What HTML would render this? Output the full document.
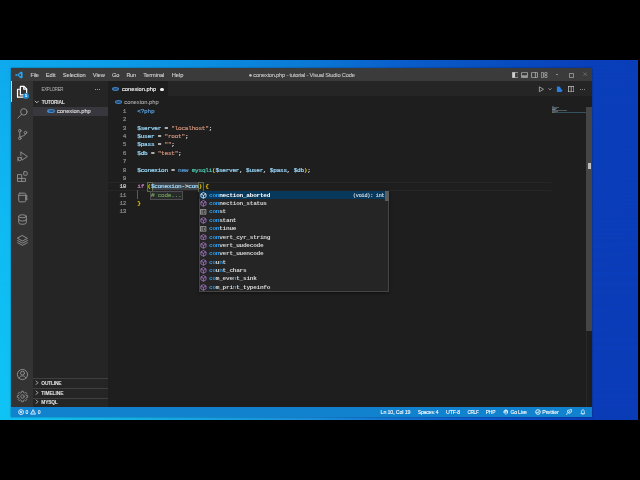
<!DOCTYPE html>
<html lang="en"><head><meta charset="utf-8"><title>conexion.php - tutorial - Visual Studio Code</title>
<style>
html,body{margin:0;padding:0;background:#000;}
body{width:640px;height:480px;position:relative;overflow:hidden;font-family:"Liberation Sans",sans-serif;}
#root{position:absolute;left:0;top:0;width:640px;height:480px;will-change:transform}
.b{position:absolute;display:block}
.t{position:absolute;white-space:pre;line-height:10px;height:10px;-webkit-text-stroke:.1px currentColor}
#wall{left:0;top:60px;width:638px;height:360px;background:linear-gradient(to right,#0faaed 0%,#0c9ee9 16.6%,#0b8de1 32.3%,#0b79d6 48%,#0a5dca 63.6%,#084dbf 79.3%,#0a3fba 93%,#0a3eba 100%)}
#wall2{left:0;top:60px;width:638px;height:360px;background:linear-gradient(to right,#0fc3f5 0%,#17b4e8 18%,#1a8fdd 49%,#0d55c8 77.6%,#0b3cb8 93%,#0b3cb8 100%);-webkit-mask-image:linear-gradient(to bottom,transparent 0%,rgba(0,0,0,.7) 50%,#000 97%);mask-image:linear-gradient(to bottom,transparent 0%,rgba(0,0,0,.7) 50%,#000 97%)}
.c{font-family:"Liberation Mono",monospace;font-size:6.100px;white-space:pre;position:absolute;line-height:8px;height:8px;letter-spacing:-0.261px;-webkit-text-stroke:.2px currentColor}
</style></head>
<body>
<div id="root">
<div class="b" id="wall"></div><div class="b" id="wall2"></div>
<div class="b" style="left:11.00px;top:68.00px;width:581.00px;height:348.80px;background:#1e1e1e;box-shadow:0 0 1.6px rgba(0,10,40,.55);"></div>
<div class="b" style="left:11.00px;top:68.00px;width:581.00px;height:13.20px;background:#3b3b3b;"></div>
<div class="b" style="left:11.00px;top:81.20px;width:21.50px;height:325.55px;background:#333333;"></div>
<div class="b" style="left:32.50px;top:81.20px;width:75.30px;height:325.55px;background:#252526;"></div>
<div class="b" style="left:107.80px;top:81.20px;width:484.20px;height:15.20px;background:#252526;"></div>
<div class="b" style="left:11.00px;top:406.75px;width:581.00px;height:10.05px;background:#1182ce;"></div>
<svg class="b" style="left:14.90px;top:71.00px;" width="8.20" height="8.00" viewBox="0 0 16 16"><path d="M11.5 1 L15 2.6 V13.4 L11.5 15 L4.3 8.6 L1.8 10.6 L1 10 V6 L1.8 5.4 L4.3 7.4 Z M11.5 5 L7 8 L11.5 11 Z" fill="#2aa4f0" fill-rule="evenodd"/></svg>
<div class="t" style="left:30.60px;top:70px;font-size:5.56px;color:#d2d2d2;letter-spacing:-0.220px;">File</div>
<div class="t" style="left:45.70px;top:70px;font-size:5.75px;color:#d2d2d2;letter-spacing:-0.036px;">Edit</div>
<div class="t" style="left:62.80px;top:70px;font-size:5.75px;color:#d2d2d2;letter-spacing:-0.082px;">Selection</div>
<div class="t" style="left:92.80px;top:70px;font-size:5.75px;color:#d2d2d2;letter-spacing:-0.120px;">View</div>
<div class="t" style="left:111.90px;top:70px;font-size:5.75px;color:#d2d2d2;letter-spacing:-0.170px;">Go</div>
<div class="t" style="left:126.40px;top:70px;font-size:5.47px;color:#d2d2d2;letter-spacing:-0.220px;">Run</div>
<div class="t" style="left:143.30px;top:70px;font-size:5.75px;color:#d2d2d2;letter-spacing:-0.090px;">Terminal</div>
<div class="t" style="left:171.80px;top:70px;font-size:5.75px;color:#d2d2d2;letter-spacing:-0.075px;">Help</div>
<div class="t" style="left:248.70px;top:70px;font-size:5.75px;color:#c6c6c6;letter-spacing:-0.208px;">● conexion.php - tutorial - Visual Studio Code</div>
<svg class="b" style="left:511.90px;top:71.70px;" width="6.60" height="6.00" viewBox="0 0 12 11"><rect x=".6" y=".6" width="10.8" height="9.8" rx="1" fill="none" stroke="#d0d0d0" stroke-width="1.2"/><rect x=".6" y=".6" width="5" height="9.8" fill="#d0d0d0"/></svg>
<svg class="b" style="left:520.90px;top:71.70px;" width="7.00" height="6.00" viewBox="0 0 12 11"><rect x=".6" y=".6" width="10.8" height="9.8" rx="1" fill="none" stroke="#d0d0d0" stroke-width="1.2"/><rect x=".6" y="6" width="10.8" height="4.4" fill="#9a9a9a"/></svg>
<svg class="b" style="left:531.00px;top:71.70px;" width="7.00" height="6.00" viewBox="0 0 12 11"><rect x=".6" y=".6" width="10.8" height="9.8" rx="1" fill="none" stroke="#d0d0d0" stroke-width="1.2"/><path d="M7.6 .6V10.4" stroke="#d0d0d0" stroke-width="1.2"/></svg>
<svg class="b" style="left:541.30px;top:71.70px;" width="6.40" height="6.00" viewBox="0 0 12 11"><rect x=".6" y=".6" width="4.2" height="9.8" rx="1.3" fill="none" stroke="#d0d0d0" stroke-width="1.2"/><rect x="7" y=".6" width="4.4" height="4" rx="1.3" fill="none" stroke="#d0d0d0" stroke-width="1.2"/><rect x="7" y="6.4" width="4.4" height="4" rx="1.3" fill="none" stroke="#d0d0d0" stroke-width="1.2"/></svg>
<div class="b" style="left:555.50px;top:74.20px;width:2.90px;height:0.50px;background:#8e8e8e;"></div>
<div class="b" style="left:569.2px;top:72.8px;width:3.0px;height:3.0px;border:.45px solid #8e8e8e;border-radius:.8px"></div>
<svg class="b" style="left:582.60px;top:72.40px;" width="4.40" height="4.40" viewBox="0 0 10 10"><path d="M1 1L9 9M9 1L1 9" stroke="#a4a4a4" stroke-width=".9" fill="none"/></svg>
<div class="b" style="left:11.10px;top:81.30px;width:0.90px;height:21.10px;background:#a6def2;"></div>
<svg class="b" style="left:15.20px;top:84.60px;" width="13.60" height="13.60" viewBox="0 0 24 24"><g fill="none" stroke="#ffffff" stroke-width="2.2" stroke-linejoin="round" stroke-linecap="round"><path d="M9.5 2.5H16L20.5 7V17.5H9.5Z"/><path d="M15.5 2.5V7.5H20.5"/><path d="M9.5 7.5H4.5V21.5H15.5V17.5"/></g></svg>
<div class="b" style="left:22.5px;top:92.5px;width:6.8px;height:6.8px;border-radius:50%;background:#1887d6"></div>
<div class="t" style="left:22.5px;top:91px;width:6.8px;text-align:center;font-size:4.4px;color:#fff;font-weight:700">1</div>
<svg class="b" style="left:15.50px;top:106.70px;" width="13.00" height="13.00" viewBox="0 0 24 24"><g fill="none" stroke="#8e8e8e" stroke-width="1.8" stroke-linejoin="round" stroke-linecap="round"><circle cx="14.5" cy="9" r="6"/><path d="M10.3 13.4L3.5 20.5"/></g></svg>
<svg class="b" style="left:15.50px;top:127.90px;" width="13.00" height="13.00" viewBox="0 0 24 24"><g fill="none" stroke="#8e8e8e" stroke-width="1.8" stroke-linejoin="round" stroke-linecap="round"><circle cx="7" cy="5" r="2.4"/><circle cx="7" cy="19" r="2.4"/><circle cx="17.5" cy="8.5" r="2.4"/><path d="M7 7.4V16.6"/><path d="M17.5 10.9C17.5 14.5 12 14 7.6 16.8"/></g></svg>
<svg class="b" style="left:15.50px;top:149.50px;" width="13.00" height="13.00" viewBox="0 0 24 24"><g fill="none" stroke="#8e8e8e" stroke-width="1.8" stroke-linejoin="round" stroke-linecap="round"><path d="M9 4L21 12L11.5 18.5"/><path d="M9 4V10"/><circle cx="7" cy="16.5" r="3.2"/><path d="M3 13.5L4.5 14.5M3 20L4.6 18.8M11 13.5L9.5 14.5M2.6 16.8H3.8"/></g></svg>
<svg class="b" style="left:15.50px;top:170.40px;" width="13.00" height="13.00" viewBox="0 0 24 24"><g fill="none" stroke="#8e8e8e" stroke-width="1.8" stroke-linejoin="round" stroke-linecap="round"><path d="M3.5 8.5H10.5V15.5H17.5V21H3.5ZM10.5 15.5H3.5M10.5 15.5V21"/><rect x="14.2" y="3.2" width="6.4" height="6.4" rx="1"/></g></svg>
<svg class="b" style="left:15.50px;top:191.40px;" width="13.00" height="13.00" viewBox="0 0 24 24"><g fill="none" stroke="#8e8e8e" stroke-width="1.8" stroke-linejoin="round" stroke-linecap="round"><rect x="5" y="4" width="13" height="16" rx="2.2"/><path d="M5 8H18"/><path d="M18 8.5H20.3V11.5H18M18 13H20.3V16H18"/></g></svg>
<svg class="b" style="left:15.50px;top:213.10px;" width="13.00" height="13.00" viewBox="0 0 24 24"><g fill="none" stroke="#8e8e8e" stroke-width="1.8" stroke-linejoin="round" stroke-linecap="round"><ellipse cx="12" cy="6" rx="7" ry="2.8"/><path d="M5 6V18C5 19.6 8 20.8 12 20.8S19 19.6 19 18V6"/><path d="M5 12C5 13.6 8 14.8 12 14.8S19 13.6 19 12"/></g></svg>
<svg class="b" style="left:15.50px;top:234.20px;" width="13.00" height="13.00" viewBox="0 0 24 24"><g fill="none" stroke="#8e8e8e" stroke-width="1.8" stroke-linejoin="round" stroke-linecap="round"><path d="M12 3L21 8L12 13L3 8Z"/><path d="M3 12L12 17L21 12"/><path d="M3 16L12 21L21 16"/></g></svg>
<svg class="b" style="left:15.50px;top:367.70px;" width="13.00" height="13.00" viewBox="0 0 24 24"><g fill="none" stroke="#8e8e8e" stroke-width="1.8" stroke-linejoin="round" stroke-linecap="round"><circle cx="12" cy="12" r="9.4"/><circle cx="12" cy="9.4" r="3.6"/><path d="M5.6 18.6C7 15.6 9 14.6 12 14.6S17 15.6 18.4 18.6"/></g></svg>
<svg class="b" style="left:15.50px;top:389.90px;" width="13.00" height="13.00" viewBox="0 0 24 24"><g fill="none" stroke="#8e8e8e" stroke-width="1.8" stroke-linejoin="round" stroke-linecap="round"><path d="M19.18 10.20L21.68 10.47L21.68 13.53L19.18 13.80L18.35 15.80L19.93 17.76L17.76 19.93L15.80 18.35L13.80 19.18L13.53 21.68L10.47 21.68L10.20 19.18L8.20 18.35L6.24 19.93L4.07 17.76L5.65 15.80L4.82 13.80L2.32 13.53L2.32 10.47L4.82 10.20L5.65 8.20L4.07 6.24L6.24 4.07L8.20 5.65L10.20 4.82L10.47 2.32L13.53 2.32L13.80 4.82L15.80 5.65L17.76 4.07L19.93 6.24L18.35 8.20Z" stroke-width="1.7"/><circle cx="12" cy="12" r="3.2" stroke-width="1.7"/></g></svg>
<div class="t" style="left:41.60px;top:85px;font-size:4.42px;color:#b4b4b4;letter-spacing:-0.300px;-webkit-text-stroke:0;">EXPLORER</div>
<div class="b" style="left:94.55px;top:88.95px;width:1.1px;height:1.1px;border-radius:50%;background:#c4c4c4"></div>
<div class="b" style="left:96.85px;top:88.95px;width:1.1px;height:1.1px;border-radius:50%;background:#c4c4c4"></div>
<div class="b" style="left:99.05px;top:88.95px;width:1.1px;height:1.1px;border-radius:50%;background:#c4c4c4"></div>
<svg class="b" style="left:33.90px;top:99.30px;" width="5.60" height="5.60" viewBox="0 0 10 10"><path d="M1.5 3.3L5 6.8L8.5 3.3" fill="none" stroke="#cccccc" stroke-width="1.6"/></svg>
<div class="t" style="left:41.70px;top:98px;font-size:4.85px;color:#dedede;font-weight:700;letter-spacing:-0.190px;">TUTORIAL</div>
<div class="b" style="left:32.50px;top:106.75px;width:75.30px;height:9.30px;background:#37373d;"></div>
<div class="b" style="left:47.35px;top:109.30px;width:7.70px;height:4.20px;border-radius:50%;background:#4088cc"></div>
<div class="b" style="left:48.70px;top:110.45px;width:5.00px;height:1.90px;border-radius:50%;background:#2a5078"></div>
<div class="t" style="left:57.00px;top:106px;font-size:5.75px;color:#e0e0e0;letter-spacing:-0.037px;">conexion.php</div>
<div class="b" style="left:32.50px;top:377.70px;width:75.30px;height:0.60px;background:#3f3f3f;"></div>
<svg class="b" style="left:34.20px;top:380.30px;" width="5.40" height="5.40" viewBox="0 0 10 10"><path d="M3.5 1.3L7.2 5L3.5 8.7" fill="none" stroke="#cccccc" stroke-width="1.6"/></svg>
<div class="t" style="left:41.30px;top:379px;font-size:4.85px;color:#dedede;font-weight:700;letter-spacing:-0.181px;">OUTLINE</div>
<div class="b" style="left:32.50px;top:387.70px;width:75.30px;height:0.60px;background:#3f3f3f;"></div>
<svg class="b" style="left:34.20px;top:390.30px;" width="5.40" height="5.40" viewBox="0 0 10 10"><path d="M3.5 1.3L7.2 5L3.5 8.7" fill="none" stroke="#cccccc" stroke-width="1.6"/></svg>
<div class="t" style="left:41.30px;top:389px;font-size:4.85px;color:#dedede;font-weight:700;letter-spacing:-0.062px;">TIMELINE</div>
<div class="b" style="left:32.50px;top:397.70px;width:75.30px;height:0.60px;background:#3f3f3f;"></div>
<svg class="b" style="left:34.20px;top:399.30px;" width="5.40" height="5.40" viewBox="0 0 10 10"><path d="M3.5 1.3L7.2 5L3.5 8.7" fill="none" stroke="#cccccc" stroke-width="1.6"/></svg>
<div class="t" style="left:41.30px;top:398px;font-size:4.85px;color:#dedede;font-weight:700;letter-spacing:-0.199px;">MYSQL</div>
<div class="b" style="left:107.80px;top:81.20px;width:59.95px;height:15.20px;background:#1e1e1e;"></div>
<div class="b" style="left:111.77px;top:87.21px;width:7.47px;height:4.07px;border-radius:50%;background:#4088cc"></div>
<div class="b" style="left:113.08px;top:88.33px;width:4.85px;height:1.84px;border-radius:50%;background:#2a5078"></div>
<div class="t" style="left:122.00px;top:84px;font-size:5.75px;color:#ffffff;letter-spacing:-0.010px;">conexion.php</div>
<div class="b" style="left:160.1px;top:87.5px;width:3.8px;height:3.8px;border-radius:50%;background:#f0f0f0"></div>
<div class="b" style="left:114.86px;top:100.07px;width:7.08px;height:3.86px;border-radius:50%;background:#4088cc"></div>
<div class="b" style="left:116.10px;top:101.13px;width:4.60px;height:1.75px;border-radius:50%;background:#2a5078"></div>
<div class="t" style="left:124.30px;top:97px;font-size:5.75px;color:#ababab;letter-spacing:0.009px;">conexion.php</div>
<svg class="b" style="left:538.20px;top:85.80px;" width="6.60" height="6.60" viewBox="0 0 12 12"><path d="M2.5 1.6L10 6L2.5 10.4Z" fill="none" stroke="#d0d0d0" stroke-width="1.2" stroke-linejoin="round"/></svg>
<svg class="b" style="left:547.50px;top:87.40px;" width="4.00" height="4.00" viewBox="0 0 10 10"><path d="M1.5 3.5L5 7L8.5 3.5" fill="none" stroke="#d4d4d4" stroke-width="1.7"/></svg>
<svg class="b" style="left:555.90px;top:85.60px;" width="7.40" height="6.80" viewBox="0 0 12 12"><path d="M1 1H5.6L8 3.4V5.2L11.4 7.4L8.6 10.8H1Z" fill="#2b7de0"/></svg>
<svg class="b" style="left:567.80px;top:85.90px;" width="6.40" height="6.40" viewBox="0 0 12 12"><rect x="1" y="1" width="10" height="10" fill="none" stroke="#d0d0d0" stroke-width="1.3"/><path d="M6 1V11" stroke="#d0d0d0" stroke-width="1.3"/></svg>
<div class="b" style="left:579.90px;top:88.7px;width:.9px;height:.9px;border-radius:50%;background:#c8c8c8"></div>
<div class="b" style="left:581.70px;top:88.7px;width:.9px;height:.9px;border-radius:50%;background:#c8c8c8"></div>
<div class="b" style="left:583.50px;top:88.7px;width:.9px;height:.9px;border-radius:50%;background:#c8c8c8"></div>
<div class="b" style="left:107.80px;top:181.93px;width:443.70px;height:0.60px;background:#262626;"></div>
<div class="b" style="left:107.80px;top:190.05px;width:443.70px;height:0.60px;background:#262626;"></div>
<div class="b" style="left:150.90px;top:182.43px;width:47.60px;height:7.47px;background:#3b4146;"></div>
<div class="b" style="left:147.20px;top:182.33px;width:3.60px;height:7.27px;border:.4px solid #66664c;background:#222a20"></div>
<div class="b" style="left:198.20px;top:182.33px;width:3.60px;height:7.27px;border:.4px solid #66664c;background:#222a20"></div>
<div class="b" style="left:137.30px;top:190.40px;width:0.45px;height:8.37px;background:#5a5a5a;"></div>
<div class="b" style="left:150.40px;top:190.60px;width:31.10px;height:7.27px;border:.45px solid #4e4e4e;background:#282a2b"></div>
<div class="c" style="left:137.30px;top:108px;"><span style="color:#569cd6">&lt;?php</span></div>
<div class="c" style="left:137.30px;top:125px;"><span style="color:#9cdcfe">$server</span><span style="color:#d4d4d4"> = </span><span style="color:#ce9178">&quot;localhost&quot;</span><span style="color:#d4d4d4">;</span></div>
<div class="c" style="left:137.30px;top:133px;"><span style="color:#9cdcfe">$user</span><span style="color:#d4d4d4"> = </span><span style="color:#ce9178">&quot;root&quot;</span><span style="color:#d4d4d4">;</span></div>
<div class="c" style="left:137.30px;top:141px;"><span style="color:#9cdcfe">$pass</span><span style="color:#d4d4d4"> = </span><span style="color:#ce9178">&quot;&quot;</span><span style="color:#d4d4d4">;</span></div>
<div class="c" style="left:137.30px;top:150px;"><span style="color:#9cdcfe">$db</span><span style="color:#d4d4d4"> = </span><span style="color:#ce9178">&quot;test&quot;</span><span style="color:#d4d4d4">;</span></div>
<div class="c" style="left:137.30px;top:167px;"><span style="color:#9cdcfe">$conexion</span><span style="color:#d4d4d4"> = </span><span style="color:#569cd6">new</span><span style="color:#d4d4d4"> </span><span style="color:#4ec9b0">mysqli</span><span style="color:#ffd700">(</span><span style="color:#9cdcfe">$server</span><span style="color:#d4d4d4">, </span><span style="color:#9cdcfe">$user</span><span style="color:#d4d4d4">, </span><span style="color:#9cdcfe">$pass</span><span style="color:#d4d4d4">, </span><span style="color:#9cdcfe">$db</span><span style="color:#ffd700">)</span><span style="color:#d4d4d4">;</span></div>
<div class="c" style="left:137.30px;top:183px;"><span style="color:#c586c0">if</span><span style="color:#d4d4d4"> </span><span style="color:#ffd700">(</span><span style="color:#9cdcfe">$conexion</span><span style="color:#d4d4d4">-&gt;</span><span style="color:#9cdcfe">con</span><span style="color:#ffd700">)</span><span style="color:#d4d4d4"> </span><span style="color:#ffd700">{</span></div>
<div class="c" style="left:137.30px;top:192px;"><span style="color:#d4d4d4">    </span><span style="color:#6a9955"># code...</span></div>
<div class="c" style="left:137.30px;top:200px;"><span style="color:#ffd700">}</span></div>
<div class="c" style="left:122.80px;top:108px;"><span style="color:#8c8c8c">1</span></div>
<div class="c" style="left:122.80px;top:116px;"><span style="color:#8c8c8c">2</span></div>
<div class="c" style="left:122.80px;top:125px;"><span style="color:#8c8c8c">3</span></div>
<div class="c" style="left:122.80px;top:133px;"><span style="color:#8c8c8c">4</span></div>
<div class="c" style="left:122.80px;top:141px;"><span style="color:#8c8c8c">5</span></div>
<div class="c" style="left:122.80px;top:150px;"><span style="color:#8c8c8c">6</span></div>
<div class="c" style="left:122.80px;top:158px;"><span style="color:#8c8c8c">7</span></div>
<div class="c" style="left:122.80px;top:167px;"><span style="color:#8c8c8c">8</span></div>
<div class="c" style="left:122.80px;top:175px;"><span style="color:#8c8c8c">9</span></div>
<div class="c" style="left:119.40px;top:183px;"><span style="color:#d0d0d0">10</span></div>
<div class="c" style="left:119.40px;top:192px;"><span style="color:#8c8c8c">11</span></div>
<div class="c" style="left:119.40px;top:200px;"><span style="color:#8c8c8c">12</span></div>
<div class="c" style="left:119.40px;top:208px;"><span style="color:#8c8c8c">13</span></div>
<div class="b" style="left:586.00px;top:106.50px;width:6.00px;height:224.80px;background:#454545;"></div>
<div class="b" style="left:586.00px;top:331.30px;width:0.50px;height:75.45px;background:#282828;"></div>
<div class="b" style="left:588.00px;top:162.60px;width:2.90px;height:6.20px;background:#bdbdbd;"></div>
<div class="b" style="left:552.00px;top:112.00px;width:34.00px;height:0.50px;background:#33505f;"></div>
<div class="b" style="left:552.00px;top:106.30px;width:1.50px;height:0.45px;background:#4a78a8;opacity:.55;"></div>
<div class="b" style="left:552.00px;top:107.40px;width:6.60px;height:0.45px;background:#8296a0;opacity:.55;"></div>
<div class="b" style="left:552.00px;top:107.95px;width:4.50px;height:0.45px;background:#8296a0;opacity:.55;"></div>
<div class="b" style="left:552.00px;top:108.50px;width:3.30px;height:0.45px;background:#8296a0;opacity:.55;"></div>
<div class="b" style="left:552.00px;top:109.05px;width:3.90px;height:0.45px;background:#8296a0;opacity:.55;"></div>
<div class="b" style="left:552.00px;top:110.15px;width:15.30px;height:0.45px;background:#76909a;opacity:.55;"></div>
<div class="b" style="left:552.00px;top:111.25px;width:6.30px;height:0.45px;background:#8c8396;opacity:.55;"></div>
<div class="b" style="left:553.20px;top:111.80px;width:2.70px;height:0.45px;background:#56724c;opacity:.55;"></div>
<div class="b" style="left:552.00px;top:112.35px;width:0.30px;height:0.45px;background:#a09238;opacity:.55;"></div>
<div class="b" style="left:198.80px;top:190.50px;width:190.30px;height:101.10px;background:#252526;border:.5px solid #454545;box-sizing:border-box;box-shadow:0 1px 3px rgba(0,0,0,.45);"></div>
<div class="b" style="left:199.30px;top:190.90px;width:189.30px;height:8.38px;background:#08395d;"></div>
<div class="b" style="left:384.60px;top:190.90px;width:4.00px;height:10.60px;background:#5c5c5c;"></div>
<svg class="b" style="left:200.15px;top:191.65px;" width="6.90" height="6.90" viewBox="0 0 16 16"><g fill="none" stroke="#ffffff" stroke-width="1.7" stroke-linejoin="round"><path d="M8 1.3L14 4.4V11.2L8 14.7L2 11.2V4.4Z"/><path d="M2.3 4.6L8 7.8L13.7 4.6M8 7.8V14.4"/></g></svg>
<div class="c" style="left:209.00px;top:192px;font-weight:700;-webkit-text-stroke:0;"><span style="color:#2aa0f0">con</span><span style="color:#ffffff">nection_aborted</span></div>
<svg class="b" style="left:200.15px;top:200.03px;" width="6.90" height="6.90" viewBox="0 0 16 16"><g fill="none" stroke="#b180d7" stroke-width="1.7" stroke-linejoin="round"><path d="M8 1.3L14 4.4V11.2L8 14.7L2 11.2V4.4Z"/><path d="M2.3 4.6L8 7.8L13.7 4.6M8 7.8V14.4"/></g></svg>
<div class="c" style="left:209.00px;top:200px;font-weight:700;-webkit-text-stroke:0;"><span style="color:#2aa0f0">con</span><span style="color:#d6d6d6">nection_status</span></div>
<svg class="b" style="left:200.40px;top:208.96px;" width="6.40" height="5.80" viewBox="0 0 14 12"><g fill="none" stroke="#bdbdbd" stroke-width="1.5"><rect x="1" y="1.2" width="12" height="9.6"/><path d="M3 3.6H7M3 6H6M3 8.4H7M9.4 3.4V8.6" /></g></svg>
<div class="c" style="left:209.00px;top:208px;font-weight:700;-webkit-text-stroke:0;"><span style="color:#2aa0f0">con</span><span style="color:#d6d6d6">st</span></div>
<svg class="b" style="left:200.15px;top:216.79px;" width="6.90" height="6.90" viewBox="0 0 16 16"><g fill="none" stroke="#b180d7" stroke-width="1.7" stroke-linejoin="round"><path d="M8 1.3L14 4.4V11.2L8 14.7L2 11.2V4.4Z"/><path d="M2.3 4.6L8 7.8L13.7 4.6M8 7.8V14.4"/></g></svg>
<div class="c" style="left:209.00px;top:217px;font-weight:700;-webkit-text-stroke:0;"><span style="color:#2aa0f0">con</span><span style="color:#d6d6d6">stant</span></div>
<svg class="b" style="left:200.40px;top:225.72px;" width="6.40" height="5.80" viewBox="0 0 14 12"><g fill="none" stroke="#bdbdbd" stroke-width="1.5"><rect x="1" y="1.2" width="12" height="9.6"/><path d="M3 3.6H7M3 6H6M3 8.4H7M9.4 3.4V8.6" /></g></svg>
<div class="c" style="left:209.00px;top:225px;font-weight:700;-webkit-text-stroke:0;"><span style="color:#2aa0f0">con</span><span style="color:#d6d6d6">tinue</span></div>
<svg class="b" style="left:200.15px;top:233.55px;" width="6.90" height="6.90" viewBox="0 0 16 16"><g fill="none" stroke="#b180d7" stroke-width="1.7" stroke-linejoin="round"><path d="M8 1.3L14 4.4V11.2L8 14.7L2 11.2V4.4Z"/><path d="M2.3 4.6L8 7.8L13.7 4.6M8 7.8V14.4"/></g></svg>
<div class="c" style="left:209.00px;top:234px;font-weight:700;-webkit-text-stroke:0;"><span style="color:#2aa0f0">con</span><span style="color:#d6d6d6">vert_cyr_string</span></div>
<svg class="b" style="left:200.15px;top:241.93px;" width="6.90" height="6.90" viewBox="0 0 16 16"><g fill="none" stroke="#b180d7" stroke-width="1.7" stroke-linejoin="round"><path d="M8 1.3L14 4.4V11.2L8 14.7L2 11.2V4.4Z"/><path d="M2.3 4.6L8 7.8L13.7 4.6M8 7.8V14.4"/></g></svg>
<div class="c" style="left:209.00px;top:242px;font-weight:700;-webkit-text-stroke:0;"><span style="color:#2aa0f0">con</span><span style="color:#d6d6d6">vert_uudecode</span></div>
<svg class="b" style="left:200.15px;top:250.31px;" width="6.90" height="6.90" viewBox="0 0 16 16"><g fill="none" stroke="#b180d7" stroke-width="1.7" stroke-linejoin="round"><path d="M8 1.3L14 4.4V11.2L8 14.7L2 11.2V4.4Z"/><path d="M2.3 4.6L8 7.8L13.7 4.6M8 7.8V14.4"/></g></svg>
<div class="c" style="left:209.00px;top:250px;font-weight:700;-webkit-text-stroke:0;"><span style="color:#2aa0f0">con</span><span style="color:#d6d6d6">vert_uuencode</span></div>
<svg class="b" style="left:200.15px;top:258.69px;" width="6.90" height="6.90" viewBox="0 0 16 16"><g fill="none" stroke="#b180d7" stroke-width="1.7" stroke-linejoin="round"><path d="M8 1.3L14 4.4V11.2L8 14.7L2 11.2V4.4Z"/><path d="M2.3 4.6L8 7.8L13.7 4.6M8 7.8V14.4"/></g></svg>
<div class="c" style="left:209.00px;top:259px;font-weight:700;-webkit-text-stroke:0;"><span style="color:#2aa0f0">co</span><span style="color:#d6d6d6">u</span><span style="color:#2aa0f0">n</span><span style="color:#d6d6d6">t</span></div>
<svg class="b" style="left:200.15px;top:267.07px;" width="6.90" height="6.90" viewBox="0 0 16 16"><g fill="none" stroke="#b180d7" stroke-width="1.7" stroke-linejoin="round"><path d="M8 1.3L14 4.4V11.2L8 14.7L2 11.2V4.4Z"/><path d="M2.3 4.6L8 7.8L13.7 4.6M8 7.8V14.4"/></g></svg>
<div class="c" style="left:209.00px;top:267px;font-weight:700;-webkit-text-stroke:0;"><span style="color:#2aa0f0">co</span><span style="color:#d6d6d6">u</span><span style="color:#2aa0f0">n</span><span style="color:#d6d6d6">t_chars</span></div>
<svg class="b" style="left:200.15px;top:275.45px;" width="6.90" height="6.90" viewBox="0 0 16 16"><g fill="none" stroke="#b180d7" stroke-width="1.7" stroke-linejoin="round"><path d="M8 1.3L14 4.4V11.2L8 14.7L2 11.2V4.4Z"/><path d="M2.3 4.6L8 7.8L13.7 4.6M8 7.8V14.4"/></g></svg>
<div class="c" style="left:209.00px;top:275px;font-weight:700;-webkit-text-stroke:0;"><span style="color:#2aa0f0">co</span><span style="color:#d6d6d6">m_eve</span><span style="color:#2aa0f0">n</span><span style="color:#d6d6d6">t_sink</span></div>
<svg class="b" style="left:200.15px;top:283.83px;" width="6.90" height="6.90" viewBox="0 0 16 16"><g fill="none" stroke="#b180d7" stroke-width="1.7" stroke-linejoin="round"><path d="M8 1.3L14 4.4V11.2L8 14.7L2 11.2V4.4Z"/><path d="M2.3 4.6L8 7.8L13.7 4.6M8 7.8V14.4"/></g></svg>
<div class="c" style="left:209.00px;top:284px;font-weight:700;-webkit-text-stroke:0;"><span style="color:#2aa0f0">co</span><span style="color:#d6d6d6">m_pri</span><span style="color:#2aa0f0">n</span><span style="color:#d6d6d6">t_typeinfo</span></div>
<div class="c" style="left:353.00px;top:192px;font-size:5.1px;letter-spacing:-0.201px;"><span style="color:#c8d4dc">(void): int</span></div>
<svg class="b" style="left:17.70px;top:408.70px;" width="6.20" height="6.20" viewBox="0 0 12 12"><g fill="none" stroke="#ffffff" stroke-width="1.6"><circle cx="6" cy="6" r="4.7"/><path d="M4.1 4.1L7.9 7.9M7.9 4.1L4.1 7.9"/></g></svg>
<div class="t" style="left:25.60px;top:407px;font-size:5.00px;color:#ffffff;letter-spacing:0.000px;">0</div>
<svg class="b" style="left:29.70px;top:408.90px;" width="6.20" height="5.80" viewBox="0 0 12 12"><g fill="none" stroke="#ffffff" stroke-width="1.6" stroke-linejoin="round"><path d="M6 1.2L11.2 10.6H.8Z"/><path d="M6 4.6V7.4M6 8.3V9.3"/></g></svg>
<div class="t" style="left:37.80px;top:407px;font-size:5.00px;color:#ffffff;letter-spacing:0.000px;">0</div>
<div class="t" style="left:380.60px;top:407px;font-size:5.30px;color:#ffffff;letter-spacing:-0.144px;">Ln 10, Col 19</div>
<div class="t" style="left:417.80px;top:407px;font-size:5.10px;color:#ffffff;letter-spacing:-0.220px;">Spaces: 4</div>
<div class="t" style="left:446.10px;top:407px;font-size:5.29px;color:#ffffff;letter-spacing:-0.220px;">UTF-8</div>
<div class="t" style="left:467.40px;top:408px;font-size:4.62px;color:#ffffff;letter-spacing:-0.220px;">CRLF</div>
<div class="t" style="left:485.80px;top:408px;font-size:4.88px;color:#ffffff;letter-spacing:-0.220px;">PHP</div>
<div class="t" style="left:510.40px;top:407px;font-size:5.20px;color:#ffffff;letter-spacing:-0.220px;">Go Live</div>
<div class="t" style="left:542.20px;top:407px;font-size:5.30px;color:#ffffff;letter-spacing:-0.069px;">Prettier</div>
<svg class="b" style="left:502.60px;top:408.60px;" width="5.80" height="6.40" viewBox="0 0 12 12"><g fill="none" stroke="#ffffff" stroke-width="2.2" opacity=".92"><circle cx="6" cy="5" r="1.5" fill="#ffffff" stroke="none"/><path d="M3.3 8.4A3.8 3.8 0 1 1 8.7 8.4"/><path d="M6 5.4V11.6" stroke-width="1.5"/></g></svg>
<svg class="b" style="left:534.60px;top:408.90px;" width="6.00" height="6.00" viewBox="0 0 12 12"><g fill="none" stroke="#ffffff" stroke-width="1.7"><circle cx="6" cy="6" r="4.6"/><path d="M3.5 6.2L5.3 8L8.6 4.1"/></g></svg>
<svg class="b" style="left:566.00px;top:408.60px;" width="6.40" height="6.40" viewBox="0 0 12 12"><g fill="none" stroke="#ffffff" stroke-width="1.5"><circle cx="4.6" cy="4.4" r="2"/><path d="M1.2 10.8C1.4 8 3 7.2 4.6 7.2S7 7.8 7.6 9"/><path d="M6.6 1.4H11V5.2H9.4L8.2 6.6V5.2"/></g></svg>
<svg class="b" style="left:579.60px;top:408.70px;" width="5.80" height="6.20" viewBox="0 0 12 12"><g fill="none" stroke="#ffffff" stroke-width="1.5" stroke-linejoin="round"><path d="M6 1.4C3.8 1.4 3 3.2 3 5V7.4L1.8 9.2H10.2L9 7.4V5C9 3.2 8.2 1.4 6 1.4Z"/><path d="M5 10.8H7"/></g></svg>
</div>
</body></html>
